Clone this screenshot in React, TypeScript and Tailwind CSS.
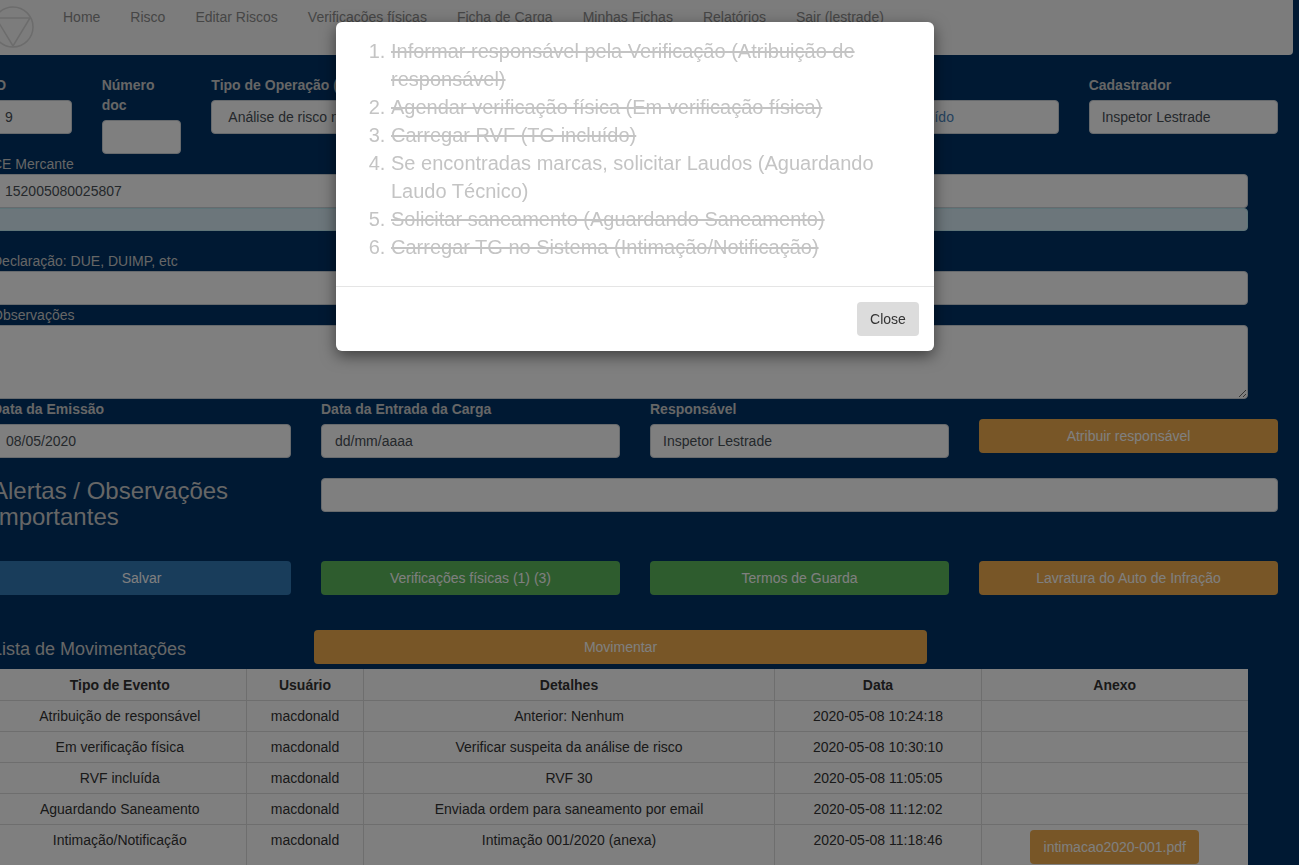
const nav = ["Home", "Risco", "Editar Riscos", "Verificações físicas", "Ficha de Carga", "Minhas Fichas", "Relatórios", "Sair (lestrade)"];

const rows = [
  ["Atribuição de responsável", "macdonald", "Anterior: Nenhum", "2020-05-08 10:24:18"],
  ["Em verificação física", "macdonald", "Verificar suspeita da análise de risco", "2020-05-08 10:30:10"],
  ["RVF incluída", "macdonald", "RVF 30", "2020-05-08 11:05:05"],
  ["Aguardando Saneamento", "macdonald", "Enviada ordem para saneamento por email", "2020-05-08 11:12:02"],
  ["Intimação/Notificação", "macdonald", "Intimação 001/2020 (anexa)", "2020-05-08 11:18:46"],
];

const steps = [
  { text: "Informar responsável pela Verificação (Atribuição de responsável)", done: true },
  { text: "Agendar verificação física (Em verificação física)", done: true },
  { text: "Carregar RVF (TG incluído)", done: true },
  { text: "Se encontradas marcas, solicitar Laudos (Aguardando Laudo Técnico)", done: false },
  { text: "Solicitar saneamento (Aguardando Saneamento)", done: true },
  { text: "Carregar TG no Sistema (Intimação/Notificação)", done: true },
];

const box = "h-[34px] w-full rounded border border-[#ced4da] bg-white text-sm leading-[32px]";
const field = `${box} px-3 text-[#495057]`;
const dateField = `${box} px-[13px] text-[#495057]`;
const strong = "block h-5 text-sm leading-5 font-bold text-[#ccc]";
const thin = "block h-5 text-sm leading-5 text-[#ccc]";

function Btn({ color, children }: { color: string; children: string }) {
  return <div className={`flex h-[34px] items-center justify-center rounded text-sm text-white ${color}`}>{children}</div>;
}

export default function App() {
  return (
    <div className="relative h-screen overflow-hidden bg-[#003366] font-['Liberation_Sans',Arial,sans-serif]">
      <div className="ml-[-8px] w-[1286px]">
        <nav className="flex h-[55px] w-[1301px] rounded-b bg-[#f8f8f8]">
          <svg className="mt-[6px] h-[42px] w-[42px] shrink-0" viewBox="0 0 42 42" fill="none" stroke="#d8d8d8" strokeWidth="1.5">
            <circle cx="21" cy="21" r="20" />
            <path d="M4 12h34L21 40z" />
          </svg>
          <div className="ml-[14px] flex">
            {nav.map((item) => (
              <span key={item} className="px-[15px] pt-[7px] text-sm leading-5 text-[#8c8c8c]">{item}</span>
            ))}
          </div>
        </nav>

        <div className="mt-5 grid grid-cols-12 gap-x-[30px]">
          <div>
            <label className={strong}>ID</label>
            <div className={`${field} mt-[5px]`}>9</div>
          </div>
          <div>
            <label className={strong}>Número doc</label>
            <div className={`${field} mt-[25px]`} />
          </div>
          <div className="col-span-3">
            <label className={strong}>Tipo de Operação (TG)</label>
            <div className={`${box} mt-[5px] pl-4 text-[#495057]`}>Análise de risco na carga</div>
          </div>
          <div className="col-span-3">
            <div className={`${field} mt-[25px]`} />
          </div>
          <div className="col-span-2">
            <div className={`${box} mt-[25px] px-3 text-[#4a86c0]`}>TG incluído</div>
          </div>
          <div className="col-span-2">
            <label className={strong}>Cadastrador</label>
            <div className={`${field} mt-[5px]`}>Inspetor Lestrade</div>
          </div>
        </div>

        <div className="w-[1256px]">
          <label className={thin}>CE Mercante</label>
          <div className={field}>152005080025807</div>
          <div className="h-[23px] rounded border border-[#bce8f1] bg-[#d9edf7]" />
          <label className={`${thin} mt-5`}>Declaração: DUE, DUIMP, etc</label>
          <div className={field} />
          <label className={thin}>Observações</label>
          <textarea className="block h-[74px] w-full rounded border border-[#ced4da] bg-white" />
        </div>

        <div className="grid grid-cols-4 gap-x-[30px]">
          <div>
            <label className={strong}>Data da Emissão</label>
            <div className={`${dateField} mt-[5px]`}>08/05/2020</div>
          </div>
          <div>
            <label className={strong}>Data da Entrada da Carga</label>
            <div className={`${dateField} mt-[5px]`}>dd/mm/aaaa</div>
          </div>
          <div>
            <label className={strong}>Responsável</label>
            <div className={`${field} mt-[5px]`}>Inspetor Lestrade</div>
          </div>
          <div className="pt-5">
            <Btn color="bg-[#f0ad4e]">Atribuir responsável</Btn>
          </div>
        </div>

        <div className="mt-5 grid grid-cols-4 gap-x-[30px]">
          <h3 className="text-2xl leading-[26px] text-[#ccc]">Alertas / Observações Importantes</h3>
          <div className="col-span-3">
            <div className={field} />
          </div>
        </div>

        <div className="mt-[31px] grid grid-cols-4 gap-x-[30px]">
          <Btn color="bg-[#337ab7]">Salvar</Btn>
          <Btn color="bg-[#5cb85c]">Verificações físicas (1) (3)</Btn>
          <Btn color="bg-[#5cb85c]">Termos de Guarda</Btn>
          <Btn color="bg-[#f0ad4e]">Lavratura do Auto de Infração</Btn>
        </div>

        <div className="mt-[35px] flex w-[1256px] items-center">
          <h4 className="mt-[4px] w-[322px] shrink-0 text-lg leading-5 text-[#ccc]">Lista de Movimentações</h4>
          <div className="w-[613px]">
            <Btn color="bg-[#f0ad4e]">Movimentar</Btn>
          </div>
        </div>

        <table className="mt-[5px] w-[1256px] table-fixed border-collapse bg-white text-center text-sm leading-5 text-[#333]">
          <thead>
            <tr className="h-[31px] border-b border-[#ddd]">
              <th className="w-[254px] border-r border-[#ddd] pt-[2px] pl-[2px]">Tipo de Evento</th>
              <th className="w-[117px] border-r border-[#ddd] pt-[2px] pl-px">Usuário</th>
              <th className="w-[411px] border-r border-[#ddd] pt-[2px] pl-px">Detalhes</th>
              <th className="w-[207px] border-r border-[#ddd] pt-[2px] pl-px">Data</th>
              <th className="w-[267px] pt-[2px]">Anexo</th>
            </tr>
          </thead>
          <tbody>
            {rows.map((row, i) => (
              <tr key={row[0]} className="border-b border-[#ddd] align-top">
                {row.map((cell, c) => (
                  <td key={cell} className={`border-r border-[#ddd] py-[5px] ${c === 0 ? "pl-[2px]" : "pl-px"}`}>{cell}</td>
                ))}
                <td className="py-[5px]">
                  {i === 4 && (
                    <div className="mx-auto w-[169px]">
                      <Btn color="bg-[#f0ad4e]">intimacao2020-001.pdf</Btn>
                    </div>
                  )}
                </td>
              </tr>
            ))}
          </tbody>
        </table>
      </div>

      <div className="fixed inset-0 bg-black/50" />

      <div className="absolute top-[22px] left-[336px] w-[598px] rounded-md bg-white shadow-[0_5px_15px_rgba(0,0,0,0.5)]">
        <div className="p-[15px]">
          <ol className="mb-[10px] list-decimal pl-10 text-xl leading-7 text-[#c4c4c4]">
            {steps.map((s) => (
              <li key={s.text} className={s.done ? "line-through" : ""}>{s.text}</li>
            ))}
          </ol>
        </div>
        <div className="flex justify-end border-t border-[#e5e5e5] p-[15px]">
          <div className="flex h-[34px] w-[62px] items-center justify-center rounded bg-[#dcdcdc] text-sm text-[#333]">Close</div>
        </div>
      </div>
    </div>
  );
}
